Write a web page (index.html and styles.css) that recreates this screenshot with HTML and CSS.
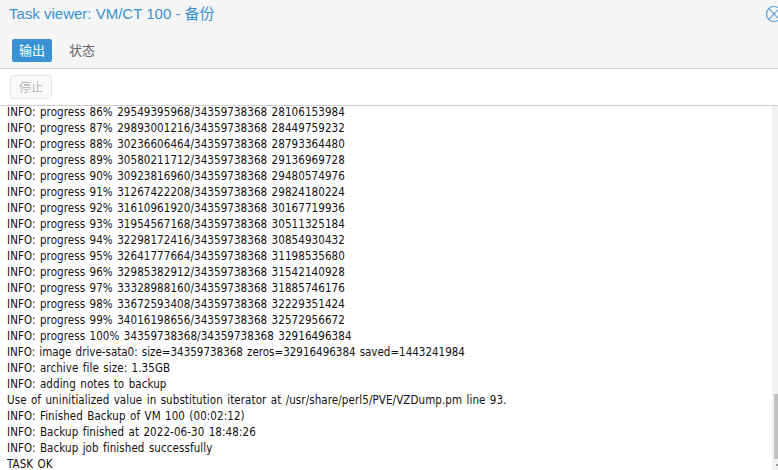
FILE: index.html
```html
<!DOCTYPE html>
<html lang="zh">
<head>
<meta charset="utf-8">
<title>Task viewer</title>
<link rel="stylesheet" href="styles.css">
</head>
<body>
<div class="window">
  <header class="titlebar">
    <h1 class="title">Task viewer: VM/CT 100 - 备份</h1>
    <svg class="close" width="26" height="26" viewBox="0 0 26 26" aria-hidden="true">
      <circle cx="13" cy="13" r="7.5"/>
      <path d="M7.7 7.7 18.3 18.3M18.3 7.7 7.7 18.3"/>
    </svg>
  </header>
  <nav class="tabs">
    <span class="tab active">输出</span>
    <span class="tab">状态</span>
  </nav>
  <div class="toolbar">
    <button class="stop" disabled>停止</button>
  </div>
  <div class="logwrap">
    <pre class="log">INFO: progress 86% 29549395968/34359738368 28106153984
INFO: progress 87% 29893001216/34359738368 28449759232
INFO: progress 88% 30236606464/34359738368 28793364480
INFO: progress 89% 30580211712/34359738368 29136969728
INFO: progress 90% 30923816960/34359738368 29480574976
INFO: progress 91% 31267422208/34359738368 29824180224
INFO: progress 92% 31610961920/34359738368 30167719936
INFO: progress 93% 31954567168/34359738368 30511325184
INFO: progress 94% 32298172416/34359738368 30854930432
INFO: progress 95% 32641777664/34359738368 31198535680
INFO: progress 96% 32985382912/34359738368 31542140928
INFO: progress 97% 33328988160/34359738368 31885746176
INFO: progress 98% 33672593408/34359738368 32229351424
INFO: progress 99% 34016198656/34359738368 32572956672
INFO: progress 100% 34359738368/34359738368 32916496384
<span class="tight">INFO: image drive-sata0: size=34359738368 zeros=32916496384 saved=1443241984</span>
INFO: archive file size: 1.35GB
INFO: adding notes to backup
Use of uninitialized value in substitution iterator at /usr/share/perl5/PVE/VZDump.pm line 93.
INFO: Finished Backup of VM 100 (00:02:12)
INFO: Backup finished at 2022-06-30 18:48:26
INFO: Backup job finished successfully
TASK OK</pre>
    <div class="scrollbar"><div class="thumb"></div><div class="arrow"></div></div>
  </div>
</div>
</body>
</html>
```
FILE: styles.css
```css
* { box-sizing: border-box; }
html, body { margin: 0; height: 100%; overflow: hidden; background: #fff; }
body { font-family: "Liberation Sans", "Noto Sans CJK SC", sans-serif; }
.window { display: flex; flex-direction: column; height: 470px; width: 778px; }
.titlebar {
  height: 38px; background: #f5f5f5; display: flex; align-items: flex-start;
  justify-content: space-between; padding: 5px 0 0 9px; overflow: hidden;
}
.title { margin: 0; font-size: 15px; font-weight: 400; line-height: 18px; color: #3892d4; }
.close { flex: none; margin: -4px -9px 0 0; }
.close circle, .close path { fill: none; stroke: #5a9fd6; stroke-width: 1.2; }
.tabs {
  height: 31px; background: #f5f5f5; border-bottom: 1px solid #cfcfcf;
  display: flex; gap: 9px; padding: 1px 0 0 12px; align-items: flex-start;
}
.tab {
  width: 40px; height: 23px; font-size: 13px; line-height: 23px; text-align: center;
  color: #666; border-radius: 2px;
}
.tab.active { background: #3892d4; color: #fff; }
.tab + .tab { padding-left: 2px; }
.toolbar {
  height: 37px; border-bottom: 1px solid #cfcfcf; padding: 6px 0 0 10px; background: #fff;
}
.stop {
  display: block; width: 42px; height: 24px; padding: 0 0 2px; margin: 0; font: inherit; font-size: 12px;
  color: #b5b5b5; background: #f9f9f9; border: 1px solid #e6e6e6; border-radius: 3px;
}
.logwrap { flex: 1; display: flex; min-height: 0; overflow: hidden; }
.log {
  flex: 1; margin: -2px 0 0; padding: 0 0 0 7px; font: 11.5px/16px "DejaVu Sans Condensed", "DejaVu Sans", sans-serif;
  font-stretch: condensed; letter-spacing: 0.08px; word-spacing: 1px;
  color: #111; overflow: hidden;
}
.tight { letter-spacing: 0; word-spacing: 0.8px; }
.scrollbar { flex: none; width: 6px; background: #f1f1f1; padding: 0 0 0 2px; display: flex; flex-direction: column; justify-content: flex-end; }
.thumb { height: 65px; background: #c1c1c1; margin-bottom: 5px; }
.arrow { width: 2px; height: 2px; margin: 0 0 4px 2px; background: #9a9a9a; }
```
